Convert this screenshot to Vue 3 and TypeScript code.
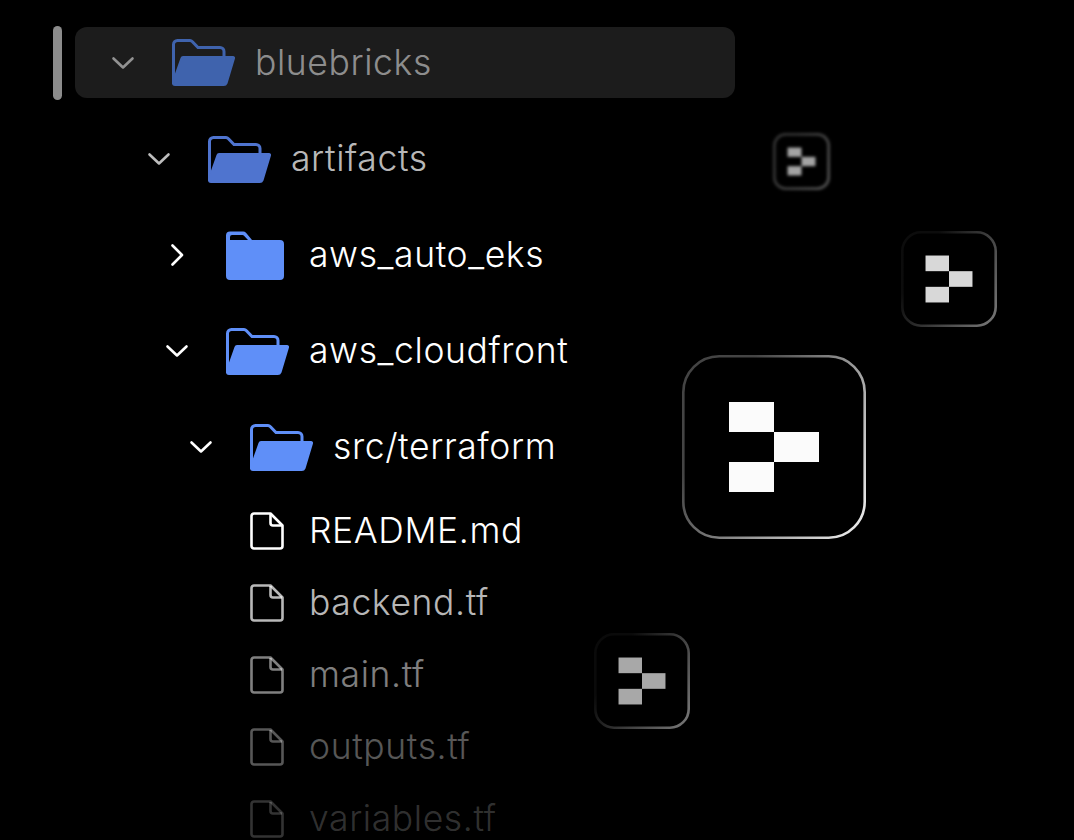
<script setup lang="ts">
type Row = {
  name: string
  kind: 'folder' | 'file'
  state?: 'open' | 'closed'
  indent: number
  fade: number
  color?: string
  tail?: number
}

type Tile = {
  id: string
  x: number
  y: number
  size: number
  edge: number
  from: string
  to: string
  fill: string
  blur?: number
}

const rows: Row[] = [
  { name: 'bluebricks', kind: 'folder', state: 'open', indent: 36, fade: 0.52, color: '#3f63ad', tail: 24 },
  { name: 'artifacts', kind: 'folder', state: 'open', indent: 72, fade: 0.74, color: '#4f74cf', tail: 24 },
  { name: 'aws_auto_eks', kind: 'folder', state: 'closed', indent: 90, fade: 1, color: '#5f8ff8', tail: 24 },
  { name: 'aws_cloudfront', kind: 'folder', state: 'open', indent: 90, fade: 1, color: '#5f8ff8', tail: 24 },
  { name: 'src/terraform', kind: 'folder', state: 'open', indent: 114, fade: 1, color: '#5f8ff8', tail: 12 },
  { name: 'README.md', kind: 'file', indent: 175, fade: 1 },
  { name: 'backend.tf', kind: 'file', indent: 175, fade: 0.72 },
  { name: 'main.tf', kind: 'file', indent: 175, fade: 0.5 },
  { name: 'outputs.tf', kind: 'file', indent: 175, fade: 0.34 },
  { name: 'variables.tf', kind: 'file', indent: 175, fade: 0.2 },
]

// floating logo tiles, all drawn on the same 184 unit grid
const tiles: Tile[] = [
  { id: 'a', x: 773, y: 133, size: 57, edge: 9, from: '#333333', to: '#505050', fill: '#a4a4a4', blur: 1.8 },
  { id: 'b', x: 901, y: 231, size: 96, edge: 5, from: '#0c0c0c', to: '#707070', fill: '#d8d8d8', blur: 0.6 },
  { id: 'c', x: 682, y: 355, size: 184, edge: 2.6, from: '#444444', to: '#e4e4e4', fill: '#fbfbfb' },
  { id: 'd', x: 594, y: 633, size: 96, edge: 5, from: '#0a0a0a', to: '#707070', fill: '#a8a8a8', blur: 0.6 },
]
</script>

<template>
  <div class="page">
    <div class="thumb" />

    <ul class="tree">
      <li
        v-for="(row, i) in rows"
        :key="row.name"
        class="row"
        :class="{ selected: i === 0 }"
        :style="{
          paddingLeft: `${row.indent}px`,
          marginBottom: `${row.tail ?? 0}px`,
          color: `rgba(255, 255, 255, ${row.fade})`,
        }"
      >
        <svg v-if="row.kind === 'folder'" class="chevron" viewBox="0 0 24 24" fill="none">
          <path
            v-if="row.state === 'open'"
            d="M2.500 7.500 12 16.500 21.500 7.500"
            stroke="currentColor"
            stroke-width="2.600"
            stroke-linecap="round"
            stroke-linejoin="round"
          />
          <path
            v-else
            d="M7.500 2.500 17 12 7.500 21.500"
            stroke="currentColor"
            stroke-width="2.600"
            stroke-linecap="round"
            stroke-linejoin="round"
          />
        </svg>

        <svg v-if="row.kind === 'folder'" class="folder" viewBox="0 0 63 49" :style="{ color: row.color }">
          <template v-if="row.state === 'open'">
            <path
              d="M1.500 46V6.500a4 4 0 0 1 4-4H18a3 3 0 0 1 2.200 1L26 9.500h22a4 4 0 0 1 4 4v6"
              fill="none"
              stroke="currentColor"
              stroke-width="3"
            />
            <path
              d="M11 18h50a2 2 0 0 1 2 2.500L55.500 45.500a4 4 0 0 1-3.800 2.500H3a3 3 0 0 1-3-3v-1L8.500 20a3 3 0 0 1 2.500-2z"
              fill="currentColor"
            />
          </template>
          <template v-else>
            <path
              d="M0 9V4.500a4 4 0 0 1 4-4H17a4 4 0 0 1 3 1.300L26 9h28a4 4 0 0 1 4 4v32a4 4 0 0 1-4 4H4a4 4 0 0 1-4-4z"
              fill="currentColor"
            />
            <path d="M4 9V6a2 2 0 0 1 2-2h10.500a2 2 0 0 1 1.500.7L22 9z" fill="#000" />
          </template>
        </svg>

        <svg v-else class="doc" viewBox="0 0 34 38" fill="none">
          <path
            d="M4 1.500H20.500L32.500 13.500V34a2.500 2.500 0 0 1-2.500 2.500H4A2.500 2.500 0 0 1 1.500 34V4A2.500 2.500 0 0 1 4 1.500z"
            stroke="currentColor"
            stroke-width="2.600"
            stroke-linejoin="round"
          />
          <path d="M20.500 2V11a2.500 2.500 0 0 0 2.500 2.500H32" stroke="currentColor" stroke-width="2.600" />
        </svg>

        <span class="name">{{ row.name }}</span>
      </li>
    </ul>

    <svg
      v-for="tile in tiles"
      :key="tile.id"
      class="tile"
      viewBox="0 0 184 184"
      :style="{
        left: `${tile.x}px`,
        top: `${tile.y}px`,
        width: `${tile.size}px`,
        height: `${tile.size}px`,
        filter: tile.blur ? `blur(${tile.blur}px)` : 'none',
      }"
    >
      <defs>
        <linearGradient :id="`edge-${tile.id}`" x1="0" y1="0.2" x2="1" y2="0.8">
          <stop offset="0" :stop-color="tile.from" />
          <stop offset="0.2" :stop-color="tile.from" />
          <stop offset="1" :stop-color="tile.to" />
        </linearGradient>
      </defs>
      <rect
        :x="tile.edge / 2"
        :y="tile.edge / 2"
        :width="184 - tile.edge"
        :height="184 - tile.edge"
        rx="36"
        fill="#000"
        :stroke="`url(#edge-${tile.id})`"
        :stroke-width="tile.edge"
      />
      <rect x="47" y="47" width="45" height="30" :fill="tile.fill" />
      <rect x="92" y="77" width="45" height="30" :fill="tile.fill" />
      <rect x="47" y="107" width="45" height="30" :fill="tile.fill" />
    </svg>
  </div>
</template>

<style scoped>
.page {
  position: relative;
  width: 1074px;
  height: 840px;
  overflow: hidden;
  background: #000;
  font-family: Inter, "Liberation Sans", sans-serif;
}
.thumb {
  position: absolute;
  left: 53px;
  top: 26px;
  width: 9px;
  height: 74px;
  border-radius: 5px;
  background: #8c8c8c;
}
.tree {
  list-style: none;
  margin: 0;
  padding: 27px 0 0 75px;
  width: 660px;
}
.row {
  display: flex;
  align-items: center;
  height: 72px;
  border-radius: 12px;
}
.row.selected {
  height: 71px;
  margin-bottom: 25px !important;
  background: #1c1c1c;
}
.chevron {
  flex: none;
  width: 24px;
  height: 24px;
  margin-right: 37px;
}
.folder {
  flex: none;
  width: 63px;
  height: 49px;
  margin-right: 20px;
}
.doc {
  flex: none;
  width: 34px;
  height: 38px;
  margin-right: 25px;
}
.name {
  font-size: 35.500px;
  font-weight: 300;
  letter-spacing: 0.6px;
  line-height: 1;
  white-space: nowrap;
}
.tile {
  position: absolute;
}
</style>

<style>
html,
body {
  background: #000;
  overflow: hidden;
}
</style>
